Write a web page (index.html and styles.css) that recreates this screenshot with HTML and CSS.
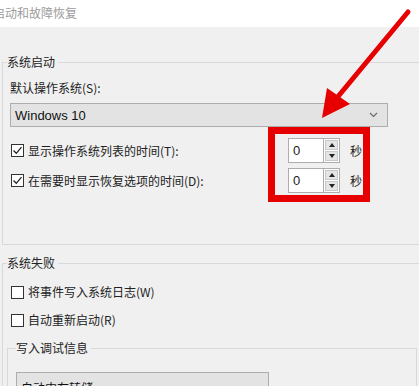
FILE: index.html
```html
<!DOCTYPE html>
<html lang="zh-CN">
<head>
<meta charset="utf-8">
<link rel="stylesheet" href="styles.css">
</head>
<body>
<div class="window">
  <div class="titlebar">启动和故障恢复</div>
  <div class="content">
    <fieldset class="group">
      <legend>系统启动</legend>
      <div class="group-body">
        <div class="field-label">默认操作系统(S):</div>
        <div class="select wide"><span>Windows 10</span>
          <svg class="chev" width="9" height="6" viewBox="0 0 9 6"><path d="M1 1 L4.5 4.5 L8 1" fill="none" stroke="#666" stroke-width="1.1"/></svg>
        </div>
        <div class="time-row first">
          <label class="check"><span class="box checked"><svg width="11" height="11" viewBox="0 0 11 11"><path d="M1.5 5.5 L4.3 8.3 L9.5 2.2" fill="none" stroke="#222" stroke-width="1.3"/></svg></span>显示操作系统列表的时间(T):</label>
          <div class="spin"><div class="spin-input">0</div><div class="spin-btns"><span class="up"></span><span class="down"></span></div></div>
          <span class="unit">秒</span>
        </div>
        <div class="time-row">
          <label class="check"><span class="box checked"><svg width="11" height="11" viewBox="0 0 11 11"><path d="M1.5 5.5 L4.3 8.3 L9.5 2.2" fill="none" stroke="#222" stroke-width="1.3"/></svg></span>在需要时显示恢复选项的时间(D):</label>
          <div class="spin"><div class="spin-input">0</div><div class="spin-btns"><span class="up"></span><span class="down"></span></div></div>
          <span class="unit">秒</span>
        </div>
      </div>
    </fieldset>

    <fieldset class="group second">
      <legend>系统失败</legend>
      <div class="group-body">
        <label class="check row-a"><span class="box"></span>将事件写入系统日志(W)</label>
        <label class="check row-b"><span class="box"></span>自动重新启动(R)</label>
      </div>
      <fieldset class="subgroup">
        <legend>写入调试信息</legend>
        <div class="select narrow"><span>自动内存转储</span></div>
      </fieldset>
    </fieldset>
  </div>

  <div class="highlight"></div>
  <svg class="arrow" width="419" height="386" viewBox="0 0 419 386">
    <line x1="408" y1="12" x2="336" y2="99" stroke="#e60000" stroke-width="5" stroke-linecap="round"/>
    <polygon points="322,118 327,88 350,104" fill="#e60000"/>
  </svg>
</div>
</body>
</html>
```

FILE: styles.css
```css
* { box-sizing: border-box; }
html, body { margin: 0; padding: 0; }
body {
  width: 419px;
  height: 386px;
  overflow: hidden;
  background: #f0f0f0;
  font-family: "Noto Sans CJK SC", "Noto Sans", sans-serif;
  font-size: 12px;
  color: #222;
}
.window { position: relative; width: 419px; height: 386px; overflow: hidden; }
.titlebar {
  height: 27px;
  background: #fff;
  color: #9b9b9b;
  line-height: 26px;
  text-indent: -7px;
  white-space: nowrap;
  overflow: hidden;
}
.content { padding-top: 27px; }
.group {
  margin: 0 -30px 0 2px;
  padding: 0 0 51px 4px;
  border: 1px solid #d9d9d9;
  min-width: 0;
}
.group legend {
  padding: 0 3px 0 0;
  line-height: 16px;
  height: 16px;
}
.group-body { padding-left: 3px; }
.field-label { margin-top: 10px; line-height: 16px; height: 16px; }
.select {
  display: flex;
  align-items: center;
  justify-content: space-between;
  height: 24px;
  background: #e3e3e3;
  border: 1px solid #adadad;
  padding: 0 9px 0 4px;
  font-family: "Liberation Sans", "Noto Sans CJK SC", sans-serif;
  font-size: 13px;
  color: #111;
}
.select.wide { width: 378px; margin-top: 7px; }
.select.narrow { width: 253px; margin-top: 16px; align-items: flex-start; padding-top: 8px; height: 30px; font-family: "Noto Sans CJK SC", sans-serif; font-size: 12px; line-height: 14px; }
.time-row {
  display: grid;
  grid-template-columns: 278px 52px auto;
  align-items: center;
  height: 25px;
  margin-top: 5px;
}
.time-row.first { margin-top: 11px; }
.check {
  display: flex;
  align-items: center;
  gap: 4px;
  line-height: 16px;
  white-space: nowrap;
}
.box {
  width: 13px;
  height: 13px;
  border: 1px solid #333;
  background: #fff;
  display: flex;
  align-items: center;
  justify-content: center;
  margin-left: 1px;
  flex: none;
}
.spin { display: flex; height: 25px; }
.spin-input {
  width: 35px;
  height: 25px;
  background: #fff;
  border: 1px solid #adadad;
  border-right: none;
  padding-left: 4px;
  line-height: 23px;
  font-family: "Liberation Sans", sans-serif;
  font-size: 13px;
}
.spin-btns {
  width: 17px;
  height: 25px;
  border: 1px solid #adadad;
  background: #fff;
  padding: 1px;
  display: flex;
  flex-direction: column;
  gap: 1px;
}
.spin-btns span {
  flex: 1;
  background: #e5e5e5;
  border: 1px solid #c8c8c8;
  display: flex;
  align-items: center;
  justify-content: center;
}
.spin-btns .up::before {
  content: "";
  border-left: 3px solid transparent;
  border-right: 3px solid transparent;
  border-bottom: 4px solid #222;
}
.spin-btns .down::before {
  content: "";
  border-left: 3px solid transparent;
  border-right: 3px solid transparent;
  border-top: 4px solid #222;
}
.unit { padding-left: 10px; }
.second { margin-top: 10px; padding-bottom: 0; }
.check.row-a { margin-top: 13px; }
.check.row-b { margin-top: 12px; }
.subgroup {
  width: 410px;
  margin: 12px 0 0 0;
  padding: 0 0 0 8px;
  border: 1px solid #d9d9d9;
  min-width: 0;
}
.subgroup legend { padding: 0 3px 0 0; line-height: 16px; height: 16px; }
.highlight {
  position: absolute;
  left: 268px;
  top: 127px;
  width: 102px;
  height: 75px;
  border: 7px solid #e60000;
}
.arrow { position: absolute; left: 0; top: 0; pointer-events: none; }
```
